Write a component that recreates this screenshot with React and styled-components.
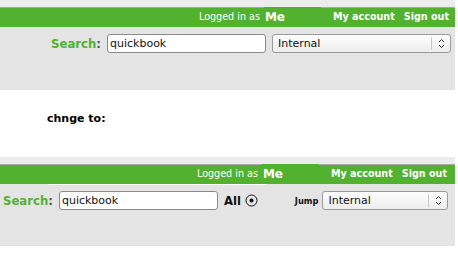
import React from 'react';
import styled, { createGlobalStyle } from 'styled-components';

const GlobalStyle = createGlobalStyle`
  html, body {
    margin: 0;
    padding: 0;
    background: #ffffff;
    font-family: "DejaVu Sans", Verdana, sans-serif;
  }
`;

const green = '#52b12e';

// One header block: thin strip, green user bar, grey search area
const Block = styled.div`
  width: 455px;
  height: ${(p) => p.h}px;
  background: #e4e4e4;
`;

const TopStrip = styled.div`
  height: 7px;
  background: #ececec;
  border-bottom: 1px solid #a8a8a8;
`;

const UserBar = styled.div`
  height: 19px;
  background: ${green};
  display: flex;
  justify-content: flex-end;
  align-items: stretch;
  padding-right: ${(p) => p.pr}px;
  color: #ffffff;
  font-size: 9.6px;
`;

const LoggedIn = styled.span`
  display: flex;
  align-items: center;
  padding-bottom: 2px;
  margin-right: 4px;
`;

const MeBox = styled.span`
  width: 56px;
  margin-top: -1px;
  background: ${green};
  display: flex;
  align-items: center;
  padding-left: 1px;
  padding-bottom: 1px;
  font-size: 12px;
  font-weight: bold;
`;

const BarLink = styled.a`
  display: flex;
  align-items: center;
  padding-bottom: 2px;
  margin-left: ${(p) => p.ml}px;
  font-weight: bold;
  color: #ffffff;
  text-decoration: none;
`;

// thin white rule seen under the second user bar
const Rule = styled.div`
  height: 1px;
  width: 217px;
  margin-left: 49px;
  background: #ffffff;
`;

const SearchRow = styled.div`
  display: flex;
  align-items: center;
  justify-content: ${(p) => (p.right ? 'flex-end' : 'flex-start')};
  margin-top: ${(p) => p.mt}px;
  padding: 0 ${(p) => (p.right ? 4 : 0)}px 0 ${(p) => (p.right ? 0 : 3)}px;
  height: 19px;
`;

const SearchLabel = styled.label`
  color: ${green};
  font-size: 11.7px;
  font-weight: bold;
  margin-right: 6px;
  span {
    color: #555555;
  }
`;

const TextInput = styled.div`
  box-sizing: border-box;
  width: 159px;
  height: 19px;
  background: #ffffff;
  border: 1px solid #8a8a8a;
  border-radius: 3px;
  font-size: 11px;
  line-height: 17px;
  padding-left: 2px;
  color: #111111;
`;

const Select = styled.div`
  box-sizing: border-box;
  width: ${(p) => p.w}px;
  height: 19px;
  margin-left: ${(p) => p.ml}px;
  background: linear-gradient(#fdfdfd, #ededed);
  border: 1px solid #9a9a9a;
  border-radius: 3px;
  display: flex;
  align-items: center;
  font-size: 11px;
  color: #111111;
`;

const SelectText = styled.span`
  flex: 1;
  padding-left: 5px;
  padding-bottom: 1px;
`;

const SelectArrow = styled.span`
  width: 18px;
  height: 13px;
  border-left: 1px solid #c8c8c8;
  display: flex;
  align-items: center;
  justify-content: center;
`;

const AllLabel = styled.span`
  font-size: 11.6px;
  font-weight: bold;
  margin-left: 6px;
  color: #111111;
`;

const Radio = styled.span`
  display: flex;
  margin-left: 4px;
`;

const JumpLabel = styled.span`
  font-size: 8.3px;
  font-weight: bold;
  margin-left: 37px;
  margin-right: 4px;
  color: #111111;
`;

const Middle = styled.div`
  height: 67px;
  box-sizing: border-box;
  padding: 22px 0 0 47px;
  font-size: 11px;
  font-weight: bold;
  color: #000000;
`;

const Chevrons = () => (
  <svg width="7" height="11" viewBox="0 0 7 11">
    <path d="M1 4 L3.5 1.5 L6 4 M1 7 L3.5 9.5 L6 7" fill="none" stroke="#333" strokeWidth="1" />
  </svg>
);

const Header = ({ pr }) => (
  <>
    <TopStrip />
    <UserBar pr={pr}>
      <LoggedIn>Logged in as</LoggedIn>
      <MeBox>Me</MeBox>
      <BarLink ml={12}>My account</BarLink>
      <BarLink ml={9}>Sign out</BarLink>
    </UserBar>
  </>
);

const App = () => (
  <>
    <GlobalStyle />
    <Block h={90}>
      <Header pr={6} />
      <SearchRow right mt={7}>
        <SearchLabel>
          Search<span>:</span>
        </SearchLabel>
        <TextInput>quickbook</TextInput>
        <Select w={179} ml={6}>
          <SelectText>Internal</SelectText>
          <SelectArrow>
            <Chevrons />
          </SelectArrow>
        </Select>
      </SearchRow>
    </Block>
    <Middle>chnge to:</Middle>
    <Block h={89}>
      <Header pr={8} />
      <Rule />
      <SearchRow mt={6}>
        <SearchLabel>
          Search<span>:</span>
        </SearchLabel>
        <TextInput>quickbook</TextInput>
        <AllLabel>All</AllLabel>
        <Radio>
          <svg width="13" height="13" viewBox="0 0 13 13">
            <circle cx="6.5" cy="6.5" r="5.5" fill="none" stroke="#111" strokeWidth="1" />
            <circle cx="6.5" cy="6.5" r="2" fill="#111" />
          </svg>
        </Radio>
        <JumpLabel>Jump</JumpLabel>
        <Select w={126} ml={0}>
          <SelectText>Internal</SelectText>
          <SelectArrow>
            <Chevrons />
          </SelectArrow>
        </Select>
      </SearchRow>
    </Block>
  </>
);

export default App;
